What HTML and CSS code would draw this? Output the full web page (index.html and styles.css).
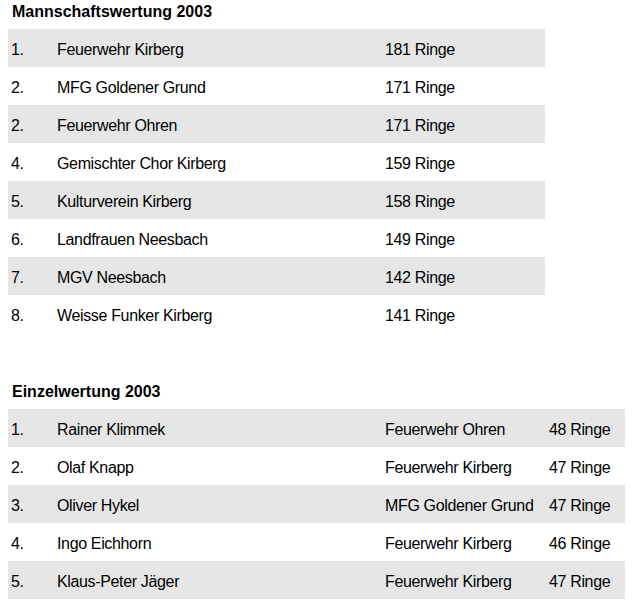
FILE: index.html
```html
<!DOCTYPE html>
<html lang="de">
<head>
<meta charset="utf-8">
<title>Wertung 2003</title>
<link rel="stylesheet" href="styles.css">
</head>
<body>
<section class="block">
  <h2 class="title">Mannschaftswertung 2003</h2>
  <div class="list team">
    <div class="row"><span>1.</span><span>Feuerwehr Kirberg</span><span>181 Ringe</span></div>
    <div class="row"><span>2.</span><span>MFG Goldener Grund</span><span>171 Ringe</span></div>
    <div class="row"><span>2.</span><span>Feuerwehr Ohren</span><span>171 Ringe</span></div>
    <div class="row"><span>4.</span><span>Gemischter Chor Kirberg</span><span>159 Ringe</span></div>
    <div class="row"><span>5.</span><span>Kulturverein Kirberg</span><span>158 Ringe</span></div>
    <div class="row"><span>6.</span><span>Landfrauen Neesbach</span><span>149 Ringe</span></div>
    <div class="row"><span>7.</span><span>MGV Neesbach</span><span>142 Ringe</span></div>
    <div class="row"><span>8.</span><span>Weisse Funker Kirberg</span><span>141 Ringe</span></div>
  </div>
</section>
<section class="block second">
  <h2 class="title">Einzelwertung 2003</h2>
  <div class="list single">
    <div class="row"><span>1.</span><span>Rainer Klimmek</span><span>Feuerwehr Ohren</span><span>48 Ringe</span></div>
    <div class="row"><span>2.</span><span>Olaf Knapp</span><span>Feuerwehr Kirberg</span><span>47 Ringe</span></div>
    <div class="row"><span>3.</span><span>Oliver Hykel</span><span>MFG Goldener Grund</span><span>47 Ringe</span></div>
    <div class="row"><span>4.</span><span>Ingo Eichhorn</span><span>Feuerwehr Kirberg</span><span>46 Ringe</span></div>
    <div class="row"><span>5.</span><span>Klaus-Peter Jäger</span><span>Feuerwehr Kirberg</span><span>47 Ringe</span></div>
  </div>
</section>
</body>
</html>
```
FILE: styles.css
```css
html, body {
  margin: 0;
  background: #ffffff;
}
body {
  padding: 2px 8px 0 8px;
  font-family: "Liberation Sans", Arial, sans-serif;
  font-size: 16px;
  color: #000000;
}
.title {
  margin: 0 0 8px 0;
  padding-left: 4px;
  font-size: 16px;
  font-weight: bold;
  line-height: 19px;
}
.second {
  margin-top: 49px;
}
.list {
  display: flex;
  flex-direction: column;
}
.row {
  display: grid;
  height: 38px;
  align-items: center;
  padding-top: 3px;
  box-sizing: border-box;
}
.row span {
  padding-left: 3px;
  white-space: nowrap;
  letter-spacing: -0.35px;
}
.row:nth-child(odd) {
  background: #e6e6e6;
}
.team {
  width: 537px;
}
.team .row {
  grid-template-columns: 46px 328px 1fr;
}
.single {
  width: 617px;
}
.single .row {
  grid-template-columns: 46px 328px 164px 1fr;
}
```
